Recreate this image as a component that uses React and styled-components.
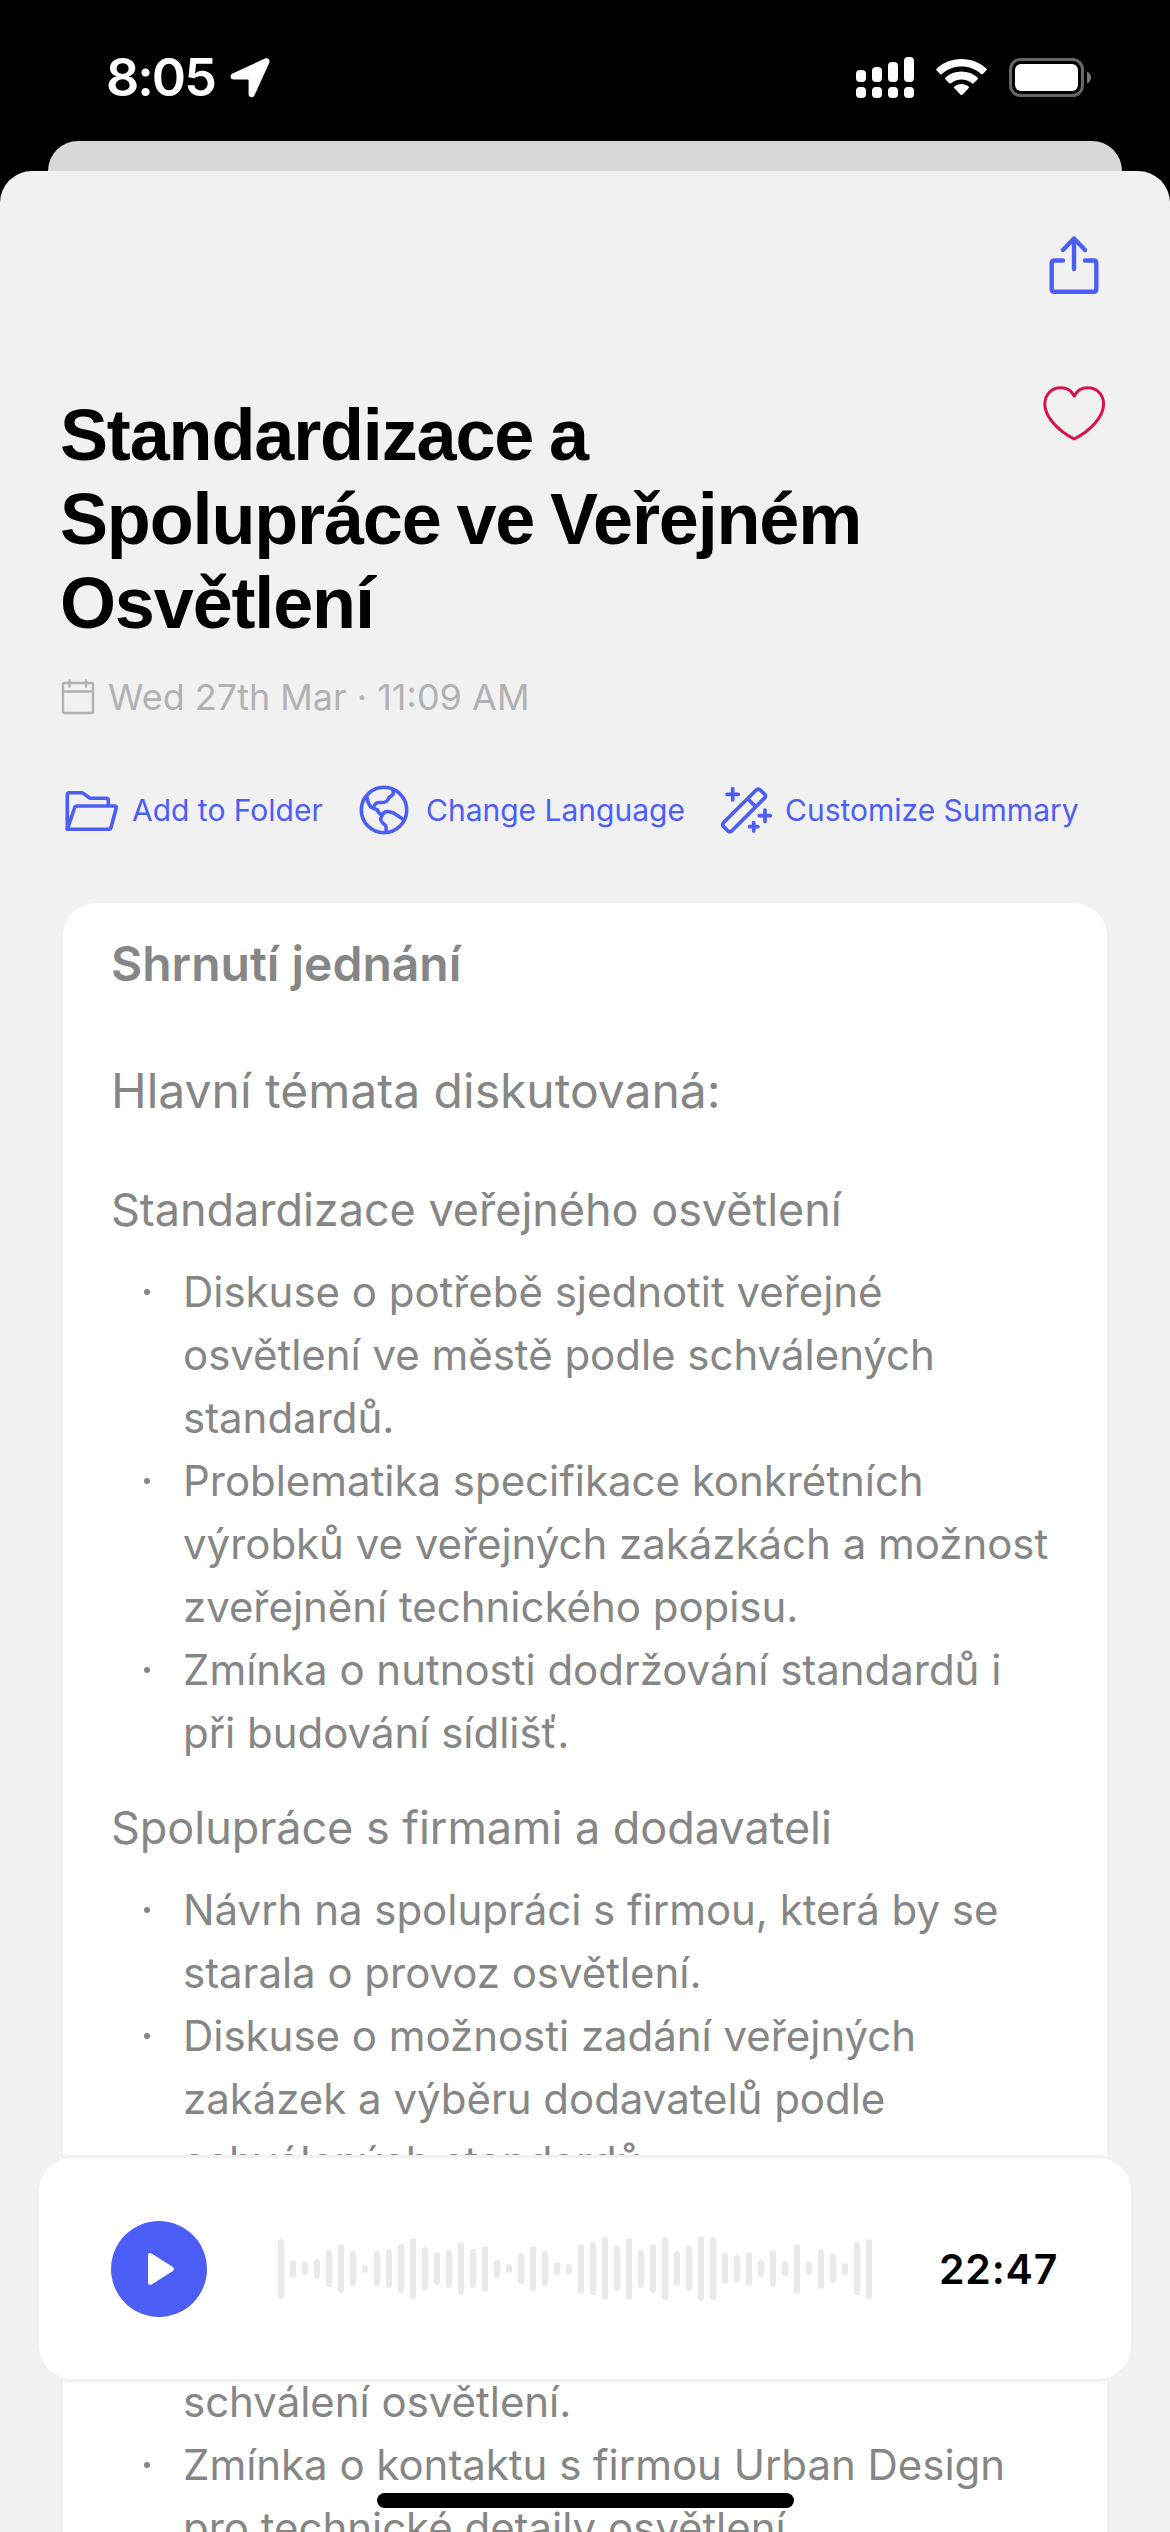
import React from "react";
import styled, { createGlobalStyle } from "styled-components";

const Global = createGlobalStyle`
  * { box-sizing: border-box; }
  body { margin: 0; background: #000; }
  h1, h2, h3, p, ul { margin: 0; padding: 0; font-weight: 400; }
  button { border: 0; padding: 0; background: none; font: inherit; color: inherit; }
  svg { display: block; flex: none; }
`;

const Screen = styled.div`
  width: 1170px;
  height: 2532px;
  overflow: hidden;
  position: relative;
  background: #000;
  font-family: Inter, "Liberation Sans", sans-serif;
  display: flex;
  flex-direction: column;
`;

const StatusBar = styled.header`
  height: 141px;
  flex: none;
  padding: 15px 79px 0 106px;
  display: flex;
  align-items: center;
  justify-content: space-between;
  color: #fff;
`;

const Clock = styled.div`
  display: flex;
  align-items: center;
  gap: 15px;
  font-size: 52px;
  line-height: 60px;
  font-weight: 600;
  letter-spacing: -2px;
`;

const Indicators = styled.div`
  display: flex;
  align-items: center;
  gap: 22px;
  margin-bottom: 1px;
`;

const BackSheet = styled.div`
  height: 30px;
  flex: none;
  margin: 0 48px;
  border-radius: 30px 30px 0 0;
  background: #d8d8d8;
`;

const Sheet = styled.main`
  flex: 1;
  min-height: 0;
  border-radius: 32px 32px 0 0;
  background: #f1f1f2;
  display: flex;
  flex-direction: column;
`;

const TopActions = styled.div`
  display: flex;
  justify-content: flex-end;
  padding: 62px 68px 0 0;
  height: 214px;
  flex: none;
`;

const TitleRow = styled.div`
  display: flex;
  justify-content: space-between;
  align-items: flex-start;
  padding: 0 62px 0 60px;
`;

const Title = styled.h1`
  display: flex;
  flex-direction: column;
  margin-top: 8px;
  font-family: "Liberation Sans", Arial, sans-serif;
  font-size: 72px;
  font-weight: 700;
  line-height: 84px;
  letter-spacing: -1.15px;
  word-spacing: -3px;
  white-space: nowrap;
  color: #000;
`;

const DateRow = styled.div`
  display: flex;
  align-items: center;
  gap: 13px;
  height: 44px;
  margin: 30px 0 0 61px;
  font-size: 36px;
  line-height: 44px;
  color: #b2b2b2;
  white-space: nowrap;
`;

const Actions = styled.nav`
  display: flex;
  align-items: center;
  height: 60px;
  margin: 61px 0 0 64px;
  color: #4d5ef6;
`;

const Action = styled.button`
  display: flex;
  align-items: center;
  gap: ${(p) => p.$gap}px;
  width: ${(p) => p.$width}px;
  font-size: 30px;
  line-height: 40px;
  white-space: nowrap;
`;

const Card = styled.section`
  margin: 63px 63px 0;
  padding: 31px 50px 0 48px;
  flex: 1;
  min-height: 0;
  overflow: hidden;
  border-radius: 33px 33px 0 0;
  background: #fff;
  color: #868686;
`;

const CardTitle = styled.h2`
  font-size: 48px;
  line-height: 60px;
  font-weight: 600;
`;

const Topic = styled.h2`
  margin-top: 67px;
  font-size: 48px;
  line-height: 60px;
  white-space: nowrap;
`;

const Subtopic = styled.h3`
  margin-top: ${(p) => p.$top}px;
  font-size: 45px;
  line-height: 60px;
  letter-spacing: -0.03px;
  white-space: nowrap;
`;

const List = styled.ul`
  list-style: none;
  margin-top: ${(p) => p.$top}px;
  font-size: 42px;
  line-height: 63px;
  letter-spacing: -0.03px;
`;

const Item = styled.li`
  display: flex;
`;

const Bullet = styled.span`
  width: 6px;
  height: 6px;
  margin: 29px 33px 0 33px;
  flex: none;
  border-radius: 50%;
  background: ${(p) => (p.$hidden ? "transparent" : "#868686")};
`;

const ItemText = styled.div`
  display: flex;
  flex-direction: column;
  white-space: nowrap;
`;

const Player = styled.aside`
  position: absolute;
  left: 36px;
  top: 2155px;
  width: 1098px;
  height: 227px;
  padding: 0 72px;
  border: 3px solid #f1f1f2;
  border-radius: 36px;
  background: #fff;
  display: flex;
  align-items: center;
`;

const PlayButton = styled.button`
  width: 96px;
  height: 96px;
  flex: none;
  border-radius: 50%;
  background: #4d5ef6;
  display: flex;
  align-items: center;
  justify-content: center;
  padding-left: 3px;
`;

const Wave = styled.div`
  display: flex;
  align-items: center;
  gap: 6px;
  margin-left: 71px;
`;

const Bar = styled.i`
  width: 6px;
  border-radius: 3px;
  background: #e9e9e9;
`;

const Duration = styled.time`
  margin-left: 67px;
  font-size: 41px;
  font-weight: 600;
  line-height: 50px;
  letter-spacing: 0.8px;
  color: #000;
`;

const HomeIndicator = styled.div`
  position: absolute;
  left: 377px;
  top: 2493px;
  width: 417px;
  height: 15px;
  border-radius: 8px;
  background: #000;
`;

const levels = [
  60, 18, 13, 20, 37, 49, 35, 8, 35, 39, 49, 61, 43, 33, 38, 53, 39, 46, 18, 9,
  31, 45, 35, 13, 10, 50, 53, 63, 45, 62, 38, 49, 63, 35, 45, 65, 63, 31, 27, 34,
  17, 37, 15, 50, 13, 40, 29, 12, 53, 60,
];

const LocationIcon = () => (
  <svg width="40" height="40" viewBox="0 0 40 40" fill="#fff">
    <path d="M35 .6C38-.5 40.4 1.500 39.300 4.700L24.500 37.300C23.100 40.500 18.600 39.800 18.600 36V22.500Q18.600 21.500 17.600 21.500H4C.2 21.500-.7 17 2.600 15.400Z" />
  </svg>
);

const SignalIcon = () => (
  <svg width="58" height="41" viewBox="0 0 58 41" fill="#fff">
    {[13, 10, 5, 0].map((y, i) => (
      <g key={y}>
        <rect x={i * 16} y={y} width="10" height={25 - y} rx="4" />
        <rect x={i * 16} y="30" width="10" height="11" rx="4" />
      </g>
    ))}
  </svg>
);

const WifiIcon = () => (
  <svg width="51" height="37" viewBox="0 0 51 37" fill="#fff">
    <path d="M25.500 0C35.500 0 44 3.700 50.300 9.600Q51.200 10.500 50.300 11.400L46.800 15Q46 15.800 45 15C39.800 10.200 33 7.600 25.500 7.600S11.200 10.200 6 15Q5 15.800 4.200 15L.7 11.400Q-.2 10.500.7 9.600C7 3.700 15.500 0 25.500 0Z" />
    <path d="M25.500 12.500C31.800 12.500 37.300 14.700 41.500 18.600Q42.300 19.500 41.500 20.400L37.700 24.200Q36.800 25 35.900 24.200C33.100 21.700 29.600 20.400 25.500 20.400S17.900 21.700 15.100 24.200Q14.200 25 13.300 24.200L9.500 20.400Q8.700 19.500 9.500 18.600C13.700 14.700 19.200 12.500 25.500 12.500Z" />
    <path d="M25.500 25C28.300 25 30.800 26 32.600 27.500Q33.500 28.400 32.600 29.300L26.400 35.800Q25.500 36.700 24.600 35.800L18.400 29.300Q17.500 28.400 18.400 27.500C20.200 26 22.700 25 25.500 25Z" />
  </svg>
);

const BatteryIcon = () => (
  <svg width="82" height="39" viewBox="0 0 82 39">
    <rect x="1.500" y="1.500" width="72" height="36" rx="10" fill="none" stroke="#666" strokeWidth="3" />
    <rect x="6" y="6" width="63" height="27" rx="6" fill="#fff" />
    <path d="M78 13.500Q82 15.500 82 19.500T78 25.500Z" fill="#777" />
  </svg>
);

const stroke = (w) => ({
  fill: "none",
  stroke: "currentColor",
  strokeWidth: w,
  strokeLinecap: "round",
  strokeLinejoin: "round",
});

const ShareIcon = () => (
  <svg width="56" height="64" viewBox="0 0 56 64" color="#4d5ef6" {...stroke(4.4)}>
    <path d="M28 36V5.500M17 17 28 5.500 39 17M17 27.500H8.500Q5.700 27.500 5.700 30.300V56Q5.700 58.800 8.500 58.800H47.500Q50.300 58.800 50.300 56V30.300Q50.300 27.500 47.500 27.500H39" />
  </svg>
);

const HeartIcon = () => (
  <svg width="66" height="58" viewBox="0 0 66 58" color="#d8124a" {...stroke(3)}>
    <path d="M32.200 11C29.500 5.500 24.500 2.800 18.700 2.800 9.500 2.800 2.800 9.800 2.800 19 2.800 31.500 15.500 45.500 32.200 54 48.900 45.500 61.600 31.500 61.600 19 61.600 9.800 54.900 2.800 45.700 2.800 39.900 2.800 34.900 5.500 32.200 11Z" />
  </svg>
);

const CalendarIcon = () => (
  <svg width="34" height="36" viewBox="0 0 34 36" {...stroke(2.400)}>
    <rect x="2" y="4" width="30" height="30" rx="1.500" />
    <path d="M2 12.500H32M8.500 1.500V7.500M25 1.500V7.500" />
  </svg>
);

const FolderIcon = () => (
  <svg width="56" height="46" viewBox="0 0 56 46" {...stroke(3.600)}>
    <path d="M3.300 42.300V7.700Q3.300 5.700 5.300 5.700H17Q18.500 5.700 19.700 6.600L26 11.300H42.300Q44.300 11.300 44.300 13.300V18.500" />
    <path d="M3.300 42.300 10.700 20.500Q11.200 19 13 19H50.500Q52.800 19 52.200 21L46.900 41Q46.500 42.300 45 42.300Z" />
  </svg>
);

const GlobeIcon = () => (
  <svg width="50" height="50" viewBox="0 0 50 50" {...stroke(3.600)}>
    <circle cx="25" cy="25" r="22.700" />
    <path d="M7.700 11.500Q8.500 18 12 22.200Q14.500 24.200 18 24.500L20 28Q21 29.200 23.700 29.200M33.800 4.500Q35 8.500 33.500 10L30 12.500Q28.500 16.800 25.300 17.300L18.500 17.800Q16 18 14.300 23" />
    <path d="M44.500 34.500 34.500 28Q33 27.200 28.500 26.500Q25 26.800 23.700 29.200L21.700 33.500Q21.500 36 23 37.200L26.500 40.500Q27.500 42 27 47" />
  </svg>
);

const WandIcon = () => (
  <svg width="52" height="48" viewBox="0 0 52 48" {...stroke(3.700)}>
    <path d="M3.400 36.800 36.500 3.800Q38.300 2.300 40.100 3.800L44.700 8.300Q46.200 10.100 44.700 11.900L11.600 45Q9.800 46.400 8 45L3.400 40.400Q2 38.600 3.400 36.800ZM27.700 12.700 35.600 20.600M12.700 2.600V14M7 8.300H18.400M45 24V35.400M39.300 29.700H50.200M33.700 36.500V44.900M29.500 40.700H37.900" />
  </svg>
);

const PlayIcon = () => (
  <svg width="26" height="32" viewBox="0 0 26 32" fill="#fff">
    <path d="M0 3Q0-1.500 4 .8L24.500 13.800Q27.500 16 24.500 18.200L4 31.200Q0 33.500 0 29Z" />
  </svg>
);

const Points = ({ items, top }) => (
  <List $top={top}>
    {items.map((lines) => (
      <Item key={lines[0]}>
        <Bullet $hidden={lines.length === 1} />
        <ItemText>
          {lines.map((l) => (
            <span key={l}>{l}</span>
          ))}
        </ItemText>
      </Item>
    ))}
  </List>
);

const standards = [
  ["Diskuse o potřebě sjednotit veřejné", "osvětlení ve městě podle schválených", "standardů."],
  ["Problematika specifikace konkrétních", "výrobků ve veřejných zakázkách a možnost", "zveřejnění technického popisu."],
  ["Zmínka o nutnosti dodržování standardů i", "při budování sídlišť."],
];

const companies = [
  ["Návrh na spolupráci s firmou, která by se", "starala o provoz osvětlení."],
  ["Diskuse o možnosti zadání veřejných", "zakázek a výběru dodavatelů podle", "schválených standardů."],
];

const closing = [
  ["schválení osvětlení."],
  ["Zmínka o kontaktu s firmou Urban Design", "pro technické detaily osvětlení."],
];

export default function App() {
  return (
    <>
      <Global />
      <Screen>
        <StatusBar>
          <Clock>
            8:05
            <LocationIcon />
          </Clock>
          <Indicators>
            <SignalIcon />
            <WifiIcon />
            <BatteryIcon />
          </Indicators>
        </StatusBar>
        <BackSheet />
        <Sheet>
          <TopActions>
            <ShareIcon />
          </TopActions>
          <TitleRow>
            <Title>
              <span>Standardizace a</span>
              <span>Spolupráce ve Veřejném</span>
              <span>Osvětlení</span>
            </Title>
            <HeartIcon />
          </TitleRow>
          <DateRow>
            <CalendarIcon />
            Wed 27th Mar · 11:09 AM
          </DateRow>
          <Actions>
            <Action $gap={12} $width={295}>
              <FolderIcon />
              Add to Folder
            </Action>
            <Action $gap={17} $width={361}>
              <GlobeIcon />
              Change Language
            </Action>
            <Action $gap={13} $width={370}>
              <WandIcon />
              Customize Summary
            </Action>
          </Actions>
          <Card>
            <CardTitle>Shrnutí jednání</CardTitle>
            <Topic>Hlavní témata diskutovaná:</Topic>
            <Subtopic $top={59}>Standardizace veřejného osvětlení</Subtopic>
            <Points items={standards} top={20} />
            <Subtopic $top={34}>Spolupráce s firmami a dodavateli</Subtopic>
            <Points items={companies} top={20} />
            <Points items={closing} top={177} />
          </Card>
        </Sheet>
        <Player>
          <PlayButton aria-label="Play">
            <PlayIcon />
          </PlayButton>
          <Wave>
            {levels.map((h, i) => (
              <Bar key={i} style={{ height: h }} />
            ))}
          </Wave>
          <Duration>22:47</Duration>
        </Player>
        <HomeIndicator />
      </Screen>
    </>
  );
}
